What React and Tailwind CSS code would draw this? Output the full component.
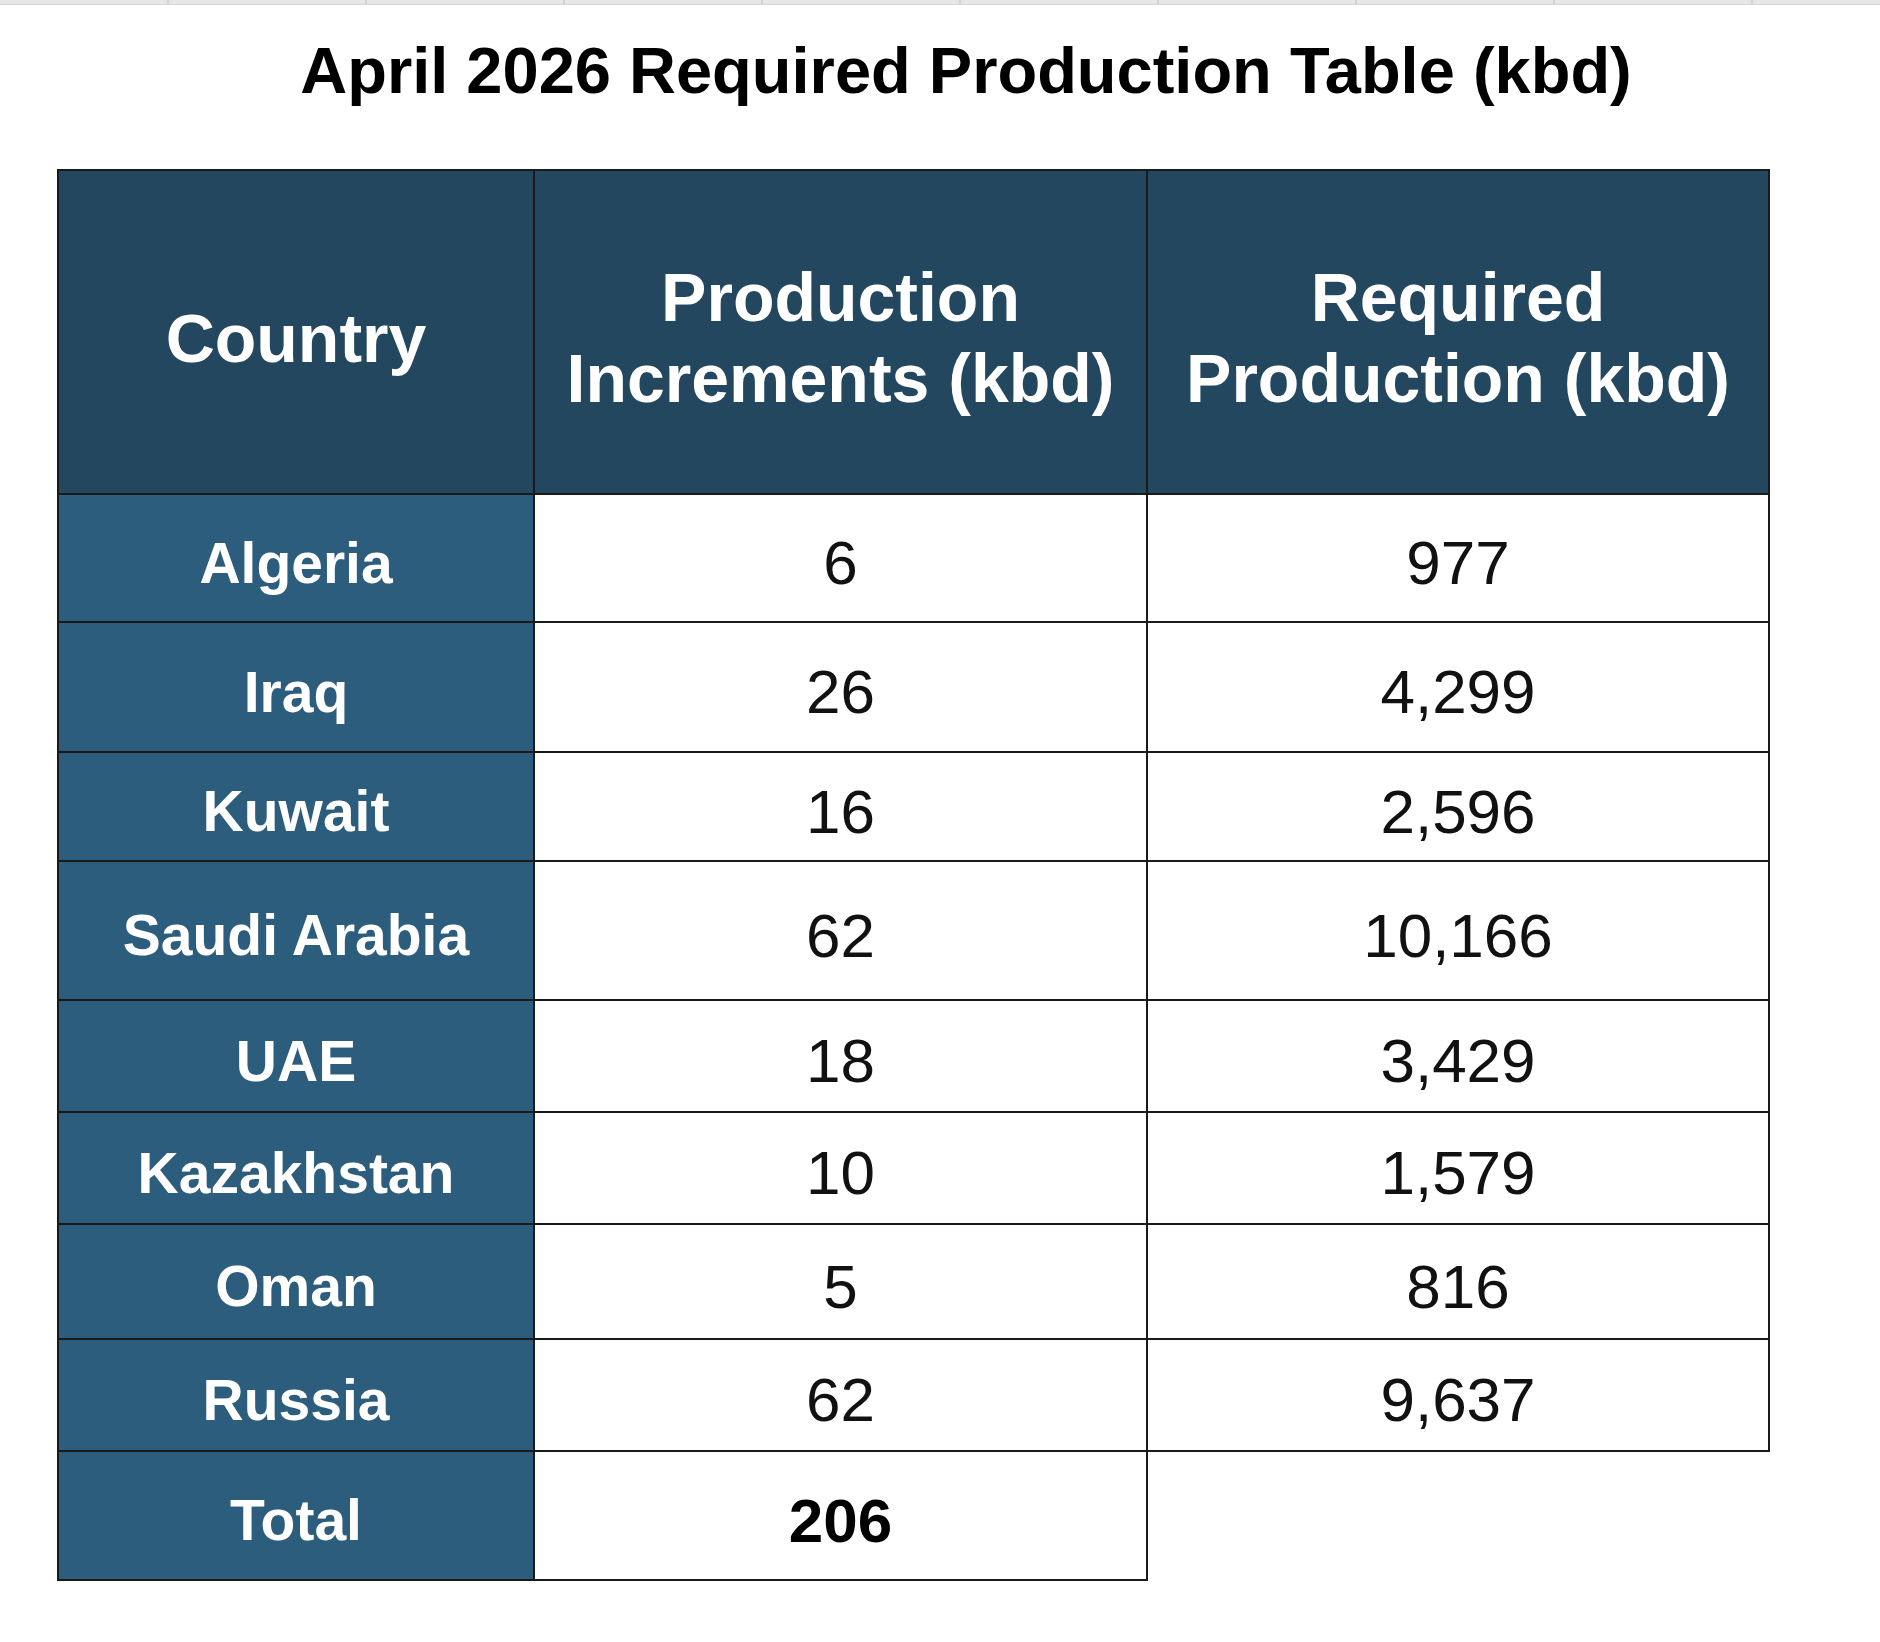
import React from 'react'

const ROWS = [
  { country: 'Algeria',      inc: '6',  req: '977',    h: 'h-[128px]' },
  { country: 'Iraq',         inc: '26', req: '4,299',  h: 'h-[130px]' },
  { country: 'Kuwait',       inc: '16', req: '2,596',  h: 'h-[109px]' },
  { country: 'Saudi Arabia', inc: '62', req: '10,166', h: 'h-[139px]' },
  { country: 'UAE',          inc: '18', req: '3,429',  h: 'h-[112px]' },
  { country: 'Kazakhstan',   inc: '10', req: '1,579',  h: 'h-[112px]' },
  { country: 'Oman',         inc: '5',  req: '816',    h: 'h-[115px]' },
  { country: 'Russia',       inc: '62', req: '9,637',  h: 'h-[112px]' },
]

// column strip cut off at the top of the sheet
const COLS = [169, 198, 198, 198, 198, 198, 198, 198, 198, 130]

const cell = 'flex items-center justify-center text-center border-b-2 border-r-2 border-[#1a1a1a]'

export default function App() {
  return (
    <div className="w-[1880px] h-[1642px] bg-white overflow-hidden font-['Liberation_Sans',Arial,sans-serif]">
      {/* top column bar */}
      <div className="flex h-[5px] bg-[#e6e6e5] border-b border-[#d6d6d6]">
        {COLS.map((w, i) => (
          <div key={i} className="h-full border-r-2 border-[#d2d2d2] shrink-0" style={{ width: w }} />
        ))}
      </div>

      {/* title */}
      <div className="mt-[34px] pl-[52px] text-center text-[65px] leading-[64px] font-bold text-black">
        April 2026 Required Production Table (kbd)
      </div>

      {/* table */}
      <div className="mt-[66px] ml-[57px] grid grid-cols-[478px_613px_622px]">
        {/* header */}
        <div className={`${cell} border-t-2 border-l-2 h-[326px] pt-[12px] bg-[#23475f] text-white font-bold text-[68px] leading-[81px]`}>
          Country
        </div>
        <div className={`${cell} border-t-2 h-[326px] pt-[12px] bg-[#23475f] text-white font-bold text-[68px] leading-[81px]`}>
          Production<br />Increments (kbd)
        </div>
        <div className={`${cell} border-t-2 h-[326px] pt-[12px] bg-[#23475f] text-white font-bold text-[68px] leading-[81px]`}>
          Required<br />Production (kbd)
        </div>

        {ROWS.map(r => (
          <React.Fragment key={r.country}>
            <div className={`${cell} ${r.h} border-l-2 pt-[10px] bg-[#2d5d7c] text-white font-bold text-[57px] leading-none`}>
              {r.country}
            </div>
            <div className={`${cell} ${r.h} pt-[10px] bg-white text-[#111] text-[62px] leading-none`}>
              {r.inc}
            </div>
            <div className={`${cell} ${r.h} pt-[10px] bg-white text-[#111] text-[62px] leading-none`}>
              {r.req}
            </div>
          </React.Fragment>
        ))}

        {/* total */}
        <div className={`${cell} h-[129px] border-l-2 pt-[10px] bg-[#2d5d7c] text-white font-bold text-[57px] leading-none`}>
          Total
        </div>
        <div className={`${cell} h-[129px] pt-[10px] bg-white text-black font-bold text-[62px] leading-none`}>
          206
        </div>
        <div className="h-[129px] bg-white" />
      </div>
    </div>
  )
}
